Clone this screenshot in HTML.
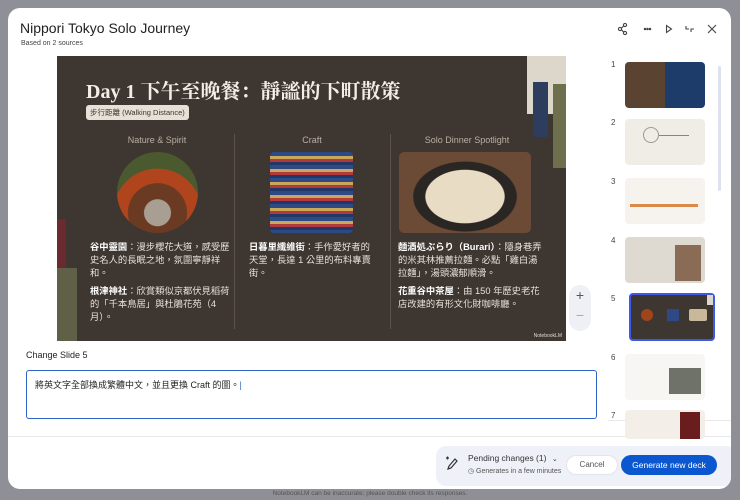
<!DOCTYPE html>
<html><head><meta charset="utf-8"><style>
*{box-sizing:border-box;margin:0;padding:0}
body{width:740px;height:500px;background:#8f8f97;font-family:"Liberation Sans","Noto Sans CJK TC",sans-serif;position:relative;overflow:hidden}
.modal{position:absolute;left:8px;top:8px;width:723px;height:481px;background:#fff;border-radius:12px;overflow:hidden}
.abs{position:absolute}
.slide{position:absolute;left:49px;top:48px;width:509px;height:285px;background:#3d3631;overflow:hidden}
.cj{font-family:"Liberation Serif","Noto Serif CJK SC",serif}
.t{color:#e8e2da;font-size:9.3px;line-height:13px;font-family:"Liberation Sans","Noto Sans CJK TC",sans-serif}
.t b{color:#fff}
.hd{color:#b9b0a5;font-size:9px;text-align:center}
.thumb{position:absolute;left:625px;width:80px;height:46px;border-radius:4px}
.num{position:absolute;left:611px;font-size:8px;color:#444}
</style></head><body>
<div class="modal">
<div class="abs" style="left:12px;top:12px;font-size:14px;color:#222">Nippori Tokyo Solo Journey</div>
<div class="abs" style="left:13px;top:32px;font-size:7px;color:#444">Based on 2 sources</div>
<svg class="abs" style="left:609px;top:14px" width="100" height="14" viewBox="0 0 100 14" fill="none" stroke="#444" stroke-width="1.1">
<circle cx="8" cy="3" r="1.6"/><circle cx="3" cy="7" r="1.6"/><circle cx="8" cy="11" r="1.6"/><path d="M4.4 6.2l2.2-2.2M4.4 7.8l2.2 2.2"/>
<circle cx="28" cy="7" r=".7" fill="#444"/><circle cx="30.5" cy="7" r=".7" fill="#444"/><circle cx="33" cy="7" r=".7" fill="#444"/>
<path d="M49.5 3.5v7l5-3.5z"/>
<path d="M70 4v3h3M75 10V7h3" transform="translate(-1 0)"/>
<path d="M91 3l8 8M99 3l-8 8"/>
</svg>
<div class="slide">
 <div class="abs" style="left:470px;top:0;width:39px;height:58px;background:#dcd6cb"></div>
 <div class="abs" style="left:476px;top:26px;width:15px;height:55px;background:#2c3d5e"></div>
 <div class="abs" style="left:496px;top:28px;width:13px;height:84px;background:#6d6f4d"></div>
 <div class="abs" style="left:0;top:163px;width:9px;height:84px;background:#6a2a2f"></div>
 <div class="abs" style="left:0;top:212px;width:20px;height:73px;background:#5f6047"></div>
 <div class="abs cj" style="left:29px;top:19px;font-size:20px;font-weight:bold;color:#f3ede4;white-space:nowrap">Day 1 下午至晚餐：靜謐的下町散策</div>
 <div class="abs" style="left:29px;top:49px;background:#e7e0d6;color:#3d3631;font-size:7.5px;padding:2px 4px;border-radius:3px">步行距離 (Walking Distance)</div>
 <div class="abs" style="left:177px;top:78px;width:1px;height:195px;background:#5a524b"></div>
 <div class="abs" style="left:333px;top:78px;width:1px;height:195px;background:#5a524b"></div>
 <div class="abs hd" style="left:30px;top:79px;width:140px">Nature &amp; Spirit</div>
 <div class="abs hd" style="left:185px;top:79px;width:140px">Craft</div>
 <div class="abs hd" style="left:340px;top:79px;width:140px">Solo Dinner Spotlight</div>
 <div class="abs" style="left:60px;top:96px;width:81px;height:81px;border-radius:50%;background:radial-gradient(circle at 50% 75%,#a89e92 0 18%,#6b3a22 19% 40%,#b0441c 41% 60%,#4a5a2e 61%)"></div>
 <div class="abs" style="left:213px;top:96px;width:83px;height:81px;border-radius:4px;background:repeating-linear-gradient(180deg,#2e4a86 0 4px,#c9a85a 4px 7px,#b33a3a 7px 10px,#213766 10px 13px)"></div>
 <div class="abs" style="left:342px;top:96px;width:132px;height:81px;border-radius:5px;background:radial-gradient(ellipse at 50% 55%,#e9dcc4 0 42%,#2a2624 43% 55%,#6b4a36 56%)"></div>
 <div class="abs t" style="left:33px;top:185px;width:140px">
  <div><b>谷中靈園</b>：漫步櫻花大道，感受歷史名人的長眠之地，氛圍寧靜祥和。</div>
  <div style="margin-top:5px"><b>根津神社</b>：欣賞類似京都伏見稻荷的「千本鳥居」與杜鵑花苑（4月）。</div></div>
 <div class="abs t" style="left:192px;top:185px;width:130px"><b>日暮里纖維街</b>：手作愛好者的天堂，長達 1 公里的布料專賣街。</div>
 <div class="abs t" style="left:341px;top:185px;width:145px">
  <div><b>麵酒処ぶらり（Burari）</b>：隱身巷弄的米其林推薦拉麵。必點「雞白湯拉麵」，湯頭濃郁順滑。</div>
  <div style="margin-top:5px"><b>花重谷中茶屋</b>：由 150 年歷史老花店改建的有形文化財咖啡廳。</div></div>
 <div class="abs" style="right:4px;bottom:2px;font-size:5px;color:#ddd">NotebookLM</div>
</div>
<div class="abs" style="left:561px;top:277px;width:22px;height:46px;border-radius:11px;background:#eef0f6;color:#555;text-align:center;font-size:14px;line-height:20px">+<br><span style="color:#aaa">−</span></div>
<div class="abs" style="left:18px;top:342px;font-size:9px;color:#222">Change Slide 5</div>
<div class="abs" style="left:18px;top:362px;width:571px;height:49px;border:1.5px solid #2f62c5;border-radius:3px;padding:7px 8px;font-size:9px;color:#222">將英文字全部換成繁體中文，並且更換 Craft 的圖。<span style="color:#36c">|</span></div>
<div class="abs" style="left:0;top:428px;width:723px;height:1px;background:#e8e8ea"></div>
<div class="abs" style="left:428px;top:438px;width:300px;height:40px;background:#eef1f8;border-radius:10px"></div>
<svg class="abs" style="left:436px;top:447px" width="14" height="16" viewBox="0 0 14 16" fill="none" stroke="#333" stroke-width="1.2"><path d="M4 14l1-3 6-7 2 2-6 7z"/><path d="M2 3h3M3.5 1.5v3"/></svg>
<div class="abs" style="left:460px;top:445px;font-size:8.5px;color:#333">Pending changes (1) <span style="font-size:7px;margin-left:3px">⌄</span></div>
<div class="abs" style="left:460px;top:459px;font-size:7px;color:#555">◷ Generates in a few minutes</div>
<div class="abs" style="left:558px;top:447px;width:52px;height:20px;border-radius:10px;background:#fff;border:1px solid #e4e4e8;font-size:8px;color:#555;text-align:center;line-height:18px">Cancel</div>
<div class="abs" style="left:613px;top:447px;width:96px;height:20px;border-radius:10px;background:#0b57d0;font-size:8.5px;color:#fff;text-align:center;line-height:20px">Generate new deck</div>
<div class="abs" style="left:710px;top:58px;width:3px;height:125px;background:#dde2ee;border-radius:2px"></div>
<div class="abs" style="left:600px;top:412px;width:123px;height:1px;background:#e8e8ea"></div>
</div>
<div class="num" style="top:60px">1</div><div class="num" style="top:118px">2</div><div class="num" style="top:177px">3</div><div class="num" style="top:236px">4</div><div class="num" style="top:294px">5</div><div class="num" style="top:353px">6</div><div class="num" style="top:411px">7</div>
<div class="thumb" style="top:62px;background:linear-gradient(90deg,#5a4330 0 50%,#1e3c6a 50%)"></div>
<div class="thumb" style="top:119px;background:#f0ede6"><div class="abs" style="left:18px;top:8px;width:16px;height:16px;border:1px solid #999;border-radius:50%"></div><div class="abs" style="left:34px;top:16px;width:30px;height:1px;background:#d66a3a"></div></div>
<div class="thumb" style="top:178px;background:#f6f3ee"><div class="abs" style="left:5px;top:26px;width:68px;height:3px;background:#d98a4a"></div></div>
<div class="thumb" style="top:237px;background:#dedad2"><div class="abs" style="left:50px;top:8px;width:26px;height:36px;background:#8a6b55"></div></div>
<div class="thumb" style="top:293px;left:629px;width:86px;height:48px;border:2px solid #3b5ae8;background:#3d3631">
 <div class="abs" style="left:10px;top:14px;width:12px;height:12px;border-radius:50%;background:#a0441c"></div>
 <div class="abs" style="left:36px;top:14px;width:12px;height:12px;background:#2e4a86"></div>
 <div class="abs" style="left:58px;top:14px;width:18px;height:12px;background:#c9b89a;border-radius:2px"></div>
 <div class="abs" style="left:76px;top:0;width:6px;height:10px;background:#dcd6cb"></div>
</div>
<div class="thumb" style="top:354px;background:#f7f6f2"><div class="abs" style="left:44px;top:14px;width:32px;height:26px;background:#6e7268"></div></div>
<div class="thumb" style="top:410px;height:29px;background:#f3efe8"><div class="abs" style="left:55px;top:2px;width:20px;height:27px;background:#6a1d1d"></div></div>
<div class="abs" style="left:0;top:490px;width:740px;text-align:center;font-size:6.5px;color:#555">NotebookLM can be inaccurate; please double check its responses.</div>
</body></html>
